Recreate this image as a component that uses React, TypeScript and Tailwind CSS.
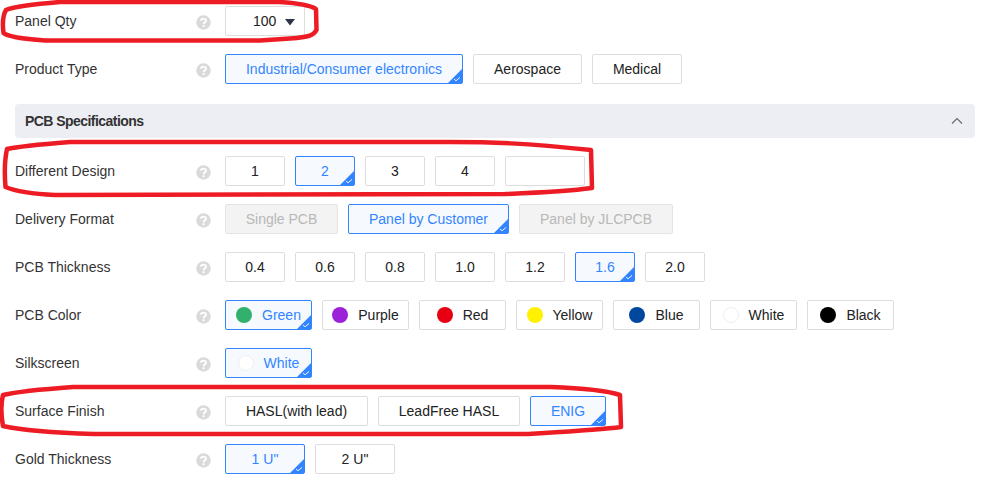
import React from "react";

const Check = () => (
  <span className="absolute right-0 bottom-0 w-[14px] h-[14px]">
    <svg width="14" height="14" viewBox="0 0 14 14" className="block">
      <polygon points="14,0 14,14 0,14" fill="#3385ff" />
      <path d="M6 10 L8 11.8 L12 8.4" fill="none" stroke="#e8f1ff" strokeWidth="1" />
    </svg>
  </span>
);

const Help = () => (
  <svg width="15" height="15" viewBox="0 0 15 15" className="block mt-[2px]">
    <circle cx="7.5" cy="7.5" r="7.2" fill="#d9d9d9" />
    <path d="M5 5.8 C5 2.9 10 2.9 10 5.6 C10 7.2 7.6 7.3 7.6 9.2" fill="none" stroke="#fff" strokeWidth="1.9" />
    <rect x="6.6" y="10.2" width="2" height="2" fill="#fff" />
  </svg>
);

type OptT = { t?: string; w: string; on?: boolean; off?: boolean; dot?: string };

const Opt = ({ t, w, on, off, dot }: OptT) => (
  <div
    className={`relative h-[30px] ${w} shrink-0 flex items-center justify-center rounded-[2px] border text-[14px] ${
      on
        ? "border-[#3385ff] bg-[#f6faff] text-[#3385ff]"
        : off
          ? "border-[#e4e4e4] bg-[#f3f3f3] text-[#b8b8b8]"
          : "border-[#dddddd] bg-white text-[#222222]"
    }`}
  >
    {dot && (
      <span
        className={`w-4 h-4 rounded-full mr-[10px] ${dot === "#ffffff" ? "border border-[#eeeeee]" : ""}`}
        style={{ backgroundColor: dot }}
      />
    )}
    {t}
    {on && <Check />}
  </div>
);

const Row = ({ label, children }: { label: string; children: React.ReactNode }) => (
  <div className="flex items-center h-[30px] pl-[15px]">
    <div className="w-[181px] text-[14px] text-[#333333]">{label}</div>
    <div className="w-[29px]"><Help /></div>
    <div className="flex gap-[10px]">{children}</div>
  </div>
);

export default function App() {
  return (
    <div className="relative w-[987px] h-[489px] overflow-hidden bg-white font-['Liberation_Sans',Arial,sans-serif]">
      <div className="flex flex-col pt-[6px] gap-[18px]">
        <Row label="Panel Qty">
          <div className="relative h-[30px] w-[80px] flex items-center rounded-[2px] border border-[#dddddd] text-[14px] text-[#222222]">
            <span className="ml-[27px]">100</span>
            <svg width="10" height="7" viewBox="0 0 10 7" className="ml-[9px] mt-[2px]">
              <polygon points="0,0 10,0 5,6.5" fill="#2f3542" />
            </svg>
          </div>
        </Row>
        <Row label="Product Type">
          <Opt t="Industrial/Consumer electronics" w="w-[238px]" on />
          <Opt t="Aerospace" w="w-[109px]" />
          <Opt t="Medical" w="w-[90px]" />
        </Row>
        <div className="flex items-center justify-between h-[34px] mt-[2px] ml-[15px] mr-[12px] rounded-[4px] bg-[#edeef3] pl-[10px] pr-[12px]">
          <span className="text-[14px] font-bold tracking-[-0.55px] text-[#333333] mt-[1px]">PCB Specifications</span>
          <svg width="12" height="8" viewBox="0 0 12 8">
            <path d="M1 6.5 L6 1.5 L11 6.5" fill="none" stroke="#666666" strokeWidth="1.1" />
          </svg>
        </div>
        <Row label="Different Design">
          <Opt t="1" w="w-[60px]" />
          <Opt t="2" w="w-[60px]" on />
          <Opt t="3" w="w-[60px]" />
          <Opt t="4" w="w-[60px]" />
          <Opt w="w-[80px]" />
        </Row>
        <Row label="Delivery Format">
          <Opt t="Single PCB" w="w-[113px]" off />
          <Opt t="Panel by Customer" w="w-[161px]" on />
          <Opt t="Panel by JLCPCB" w="w-[154px]" off />
        </Row>
        <Row label="PCB Thickness">
          <Opt t="0.4" w="w-[60px]" />
          <Opt t="0.6" w="w-[60px]" />
          <Opt t="0.8" w="w-[60px]" />
          <Opt t="1.0" w="w-[60px]" />
          <Opt t="1.2" w="w-[60px]" />
          <Opt t="1.6" w="w-[60px]" on />
          <Opt t="2.0" w="w-[60px]" />
        </Row>
        <Row label="PCB Color">
          <Opt t="Green" w="w-[87px]" on dot="#32b16c" />
          <Opt t="Purple" w="w-[87px]" dot="#9b22d8" />
          <Opt t="Red" w="w-[87px]" dot="#e60012" />
          <Opt t="Yellow" w="w-[87px]" dot="#fff100" />
          <Opt t="Blue" w="w-[87px]" dot="#00479d" />
          <Opt t="White" w="w-[87px]" dot="#ffffff" />
          <Opt t="Black" w="w-[87px]" dot="#000000" />
        </Row>
        <Row label="Silkscreen">
          <Opt t="White" w="w-[87px]" on dot="#ffffff" />
        </Row>
        <Row label="Surface Finish">
          <Opt t="HASL(with lead)" w="w-[143px]" />
          <Opt t="LeadFree HASL" w="w-[142px]" />
          <Opt t="ENIG" w="w-[76px]" on />
        </Row>
        <Row label="Gold Thickness">
          <Opt t='1 U"' w="w-[80px]" on />
          <Opt t='2 U"' w="w-[80px]" />
        </Row>
      </div>

      <svg width="987" height="489" className="absolute inset-0 pointer-events-none" fill="none" stroke="#ed1c24" strokeWidth="4.5" strokeLinejoin="round">
        <path d="M60 2 L280 2 C296 3 310 5 316 9 L316.5 30 C314 35 310 37 290 38.5 L260 40.5 L45 40.5 C25 39 8 37 3.5 33 C2.5 25 3 15 6 10 C15 6 35 4 60 2 Z" />
        <path d="M70 142 L450 142 C490 142 525 143 591 150 L592 188 C570 191 530 193 505 194 L55 195 C35 194 15 191 5.5 187 C4.5 175 5 158 7 149 C20 146 45 144 70 142 Z" />
        <path d="M73 387 L551 387 C580 388 605 390 620 395 L621 427 C600 430 560 432 526 434 L94 434 C60 433 25 431 3 426 C1 415 1 403 3 395 C20 391 45 389 73 387 Z" />
      </svg>
    </div>
  );
}
